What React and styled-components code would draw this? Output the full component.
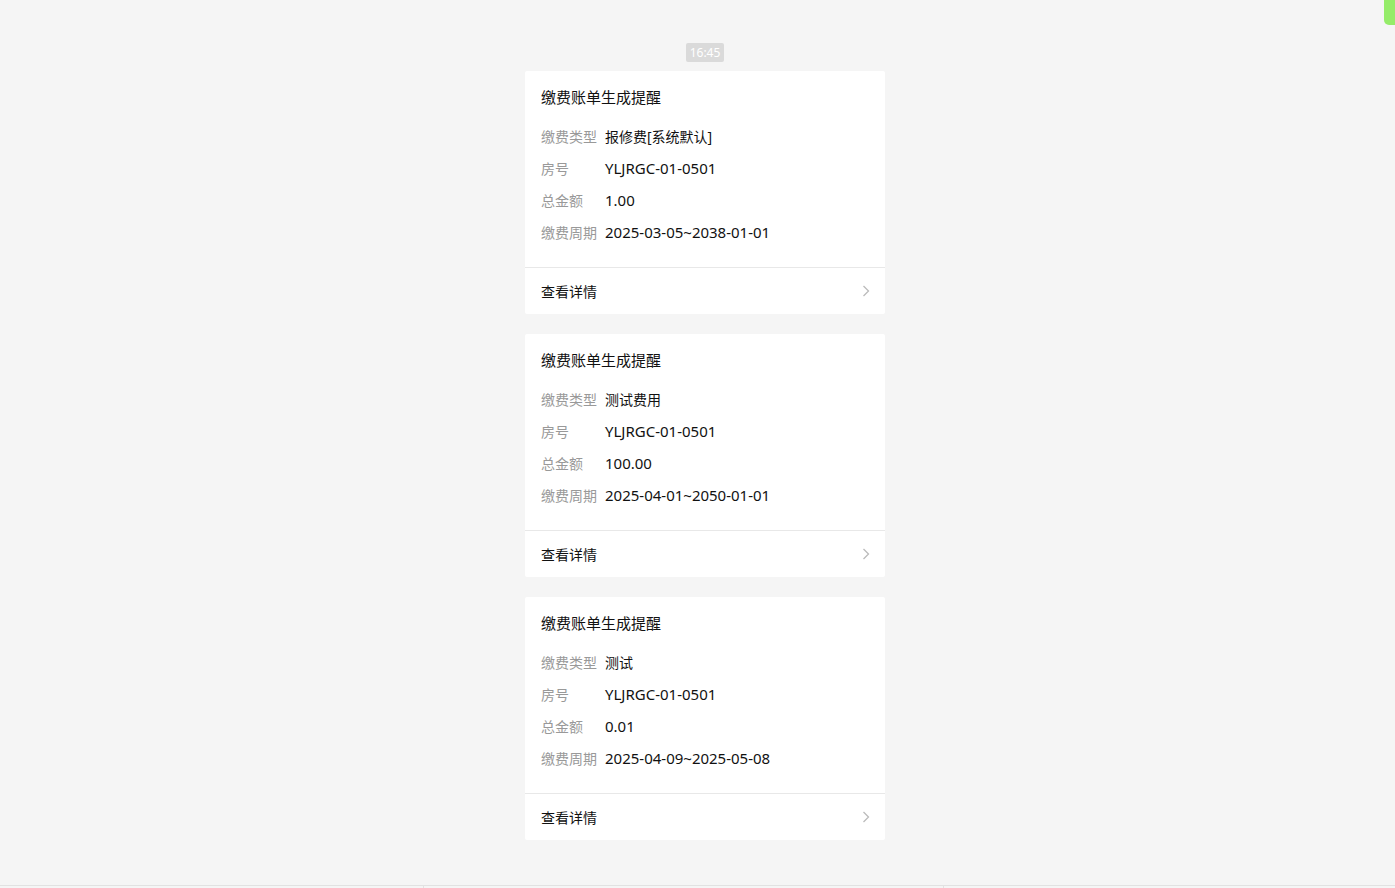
import React from "react";
import styled, { createGlobalStyle } from "styled-components";

const GlobalStyle = createGlobalStyle`
  html, body {
    margin: 0;
    padding: 0;
    background: #f5f5f5;
    font-family: "Noto Sans", "Noto Sans CJK SC", sans-serif;
  }
`;

const Page = styled.div`
  min-height: 888px;
  box-sizing: border-box;
  padding-top: 43px;
  padding-left: 15px;
  display: flex;
  flex-direction: column;
  align-items: center;
`;

const TimeTag = styled.div`
  background: #dadada;
  color: #fff;
  font-size: 12px;
  line-height: 19px;
  height: 19px;
  padding: 0 4px;
  border-radius: 2px;
  margin-bottom: 9px;
`;

const List = styled.div`
  display: flex;
  flex-direction: column;
  gap: 20px;
`;

const Card = styled.div`
  width: 360px;
  background: #fff;
  border-radius: 2px;
`;

const Body = styled.div`
  padding: 16px 16px 18px;
`;

const Title = styled.div`
  font-size: 15px;
  line-height: 20px;
  color: #111;
  margin-bottom: 14px;
`;

const Row = styled.div`
  display: flex;
  align-items: center;
  height: 32px;
  font-size: 14px;
  line-height: 20px;
  padding-bottom: 1px;
  box-sizing: border-box;
`;

const Label = styled.span`
  width: 64px;
  flex-shrink: 0;
  color: #999;
`;

const Value = styled.span`
  color: #111;
  font-size: ${(p) => (p.$num ? "15px" : "14px")};
  margin-bottom: ${(p) => (p.$num ? "2px" : "0")};
`;

const Footer = styled.div`
  border-top: 1px solid #e8e8e8;
  height: 46px;
  padding: 0 15px 0 16px;
  display: flex;
  align-items: center;
  justify-content: space-between;
  font-size: 14px;
  color: #111;
`;

const Corner = styled.div`
  position: fixed;
  top: 0;
  right: 0;
  width: 11px;
  height: 25px;
  background: #95ec69;
  border-bottom-left-radius: 5px;
`;

const BottomBar = styled.div`
  position: fixed;
  left: 0;
  right: 0;
  bottom: 0;
  height: 2px;
  border-top: 1px solid #e2e2e2;
  display: flex;
`;

const BarCell = styled.div`
  width: ${(p) => p.w}px;
  border-right: 1px solid #e2e2e2;
`;

const Chevron = () => (
  <svg width="8" height="12" viewBox="0 0 8 12">
    <path d="M1.5 1 L6.5 6 L1.5 11" fill="none" stroke="#bbb" strokeWidth="1.3" />
  </svg>
);

const bills = [
  { type: "报修费[系统默认]", room: "YLJRGC-01-0501", amount: "1.00", period: "2025-03-05~2038-01-01" },
  { type: "测试费用", room: "YLJRGC-01-0501", amount: "100.00", period: "2025-04-01~2050-01-01" },
  { type: "测试", room: "YLJRGC-01-0501", amount: "0.01", period: "2025-04-09~2025-05-08" },
];

export default function App() {
  return (
    <>
      <GlobalStyle />
      <Corner />
      <Page>
        <TimeTag>16:45</TimeTag>
        <List>
          {bills.map((b, i) => (
            <Card key={i}>
              <Body>
                <Title>缴费账单生成提醒</Title>
                <Row><Label>缴费类型</Label><Value>{b.type}</Value></Row>
                <Row><Label>房号</Label><Value $num>{b.room}</Value></Row>
                <Row><Label>总金额</Label><Value $num>{b.amount}</Value></Row>
                <Row><Label>缴费周期</Label><Value $num>{b.period}</Value></Row>
              </Body>
              <Footer>
                <span>查看详情</span>
                <Chevron />
              </Footer>
            </Card>
          ))}
        </List>
      </Page>
      <BottomBar>
        <BarCell w={423} />
        <BarCell w={519} />
      </BottomBar>
    </>
  );
}
